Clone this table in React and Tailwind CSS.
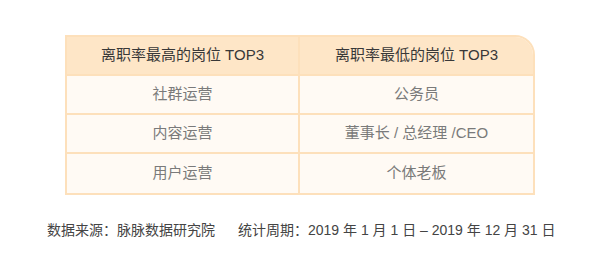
export default function App() {
  const rows = [
    ["社群运营", "公务员"],
    ["内容运营", "董事长 / 总经理 /CEO"],
    ["用户运营", "个体老板"],
  ];
  return (
    <div
      className="w-[600px] h-[269px] bg-white flex flex-col items-center"
      style={{ fontFamily: '"Liberation Sans", "Noto Sans CJK SC", sans-serif' }}
    >
      <div className="mt-[35px] w-[470px] border-2 border-[#fde0bb] rounded-tr-[20px] overflow-hidden bg-[#fffaf4]">
        <div className="grid grid-cols-2 h-[39px] bg-[#fee6c7] border-b-2 border-[#fde0bb] text-[15px] text-[#383838]">
          <div className="flex items-center justify-center border-r-2 border-[#fde0bb]">离职率最高的岗位 TOP3</div>
          <div className="flex items-center justify-center">离职率最低的岗位 TOP3</div>
        </div>
        {rows.map((r, i) => (
          <div
            key={i}
            className={`grid grid-cols-2 h-[39px] text-[15px] text-[#7a7a7a] ${i < 2 ? "border-b-2 border-[#fde0bb]" : ""}`}
          >
            <div className="flex items-center justify-center border-r-2 border-[#fde0bb]">{r[0]}</div>
            <div className="flex items-center justify-center">{r[1]}</div>
          </div>
        ))}
      </div>
      <div className="w-full pl-[47px] mt-[28px] flex text-[14px] text-[#444] leading-none">
        <span>数据来源：脉脉数据研究院</span>
        <span className="ml-[23px]">统计周期：2019 年 1 月 1 日 – 2019 年 12 月 31 日</span>
      </div>
    </div>
  );
}
